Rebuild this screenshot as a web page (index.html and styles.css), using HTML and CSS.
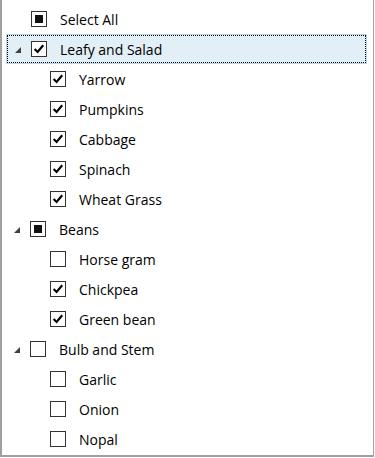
FILE: index.html
```html
<!DOCTYPE html>
<html>
<head>
    <meta charset="UTF-8">
    <title>Tree View</title>
    <link rel="stylesheet" href="styles.css">
</head>
<body>
    <div class="tree">
        <div class="row level0">
            <span class="box mixed"></span>
            <span class="label">Select All</span>
        </div>

        <!-- Leafy and Salad -->
        <div class="row level1 selected">
            <span class="arrow"></span>
            <span class="box checked"><svg viewBox="0 0 16 16"><path d="M3 8 L6.4 11.4 L12.8 3.8"/></svg></span>
            <span class="label">Leafy and Salad</span>
        </div>
        <div class="row level2">
            <span class="box checked"><svg viewBox="0 0 16 16"><path d="M3 8 L6.4 11.4 L12.8 3.8"/></svg></span>
            <span class="label">Yarrow</span>
        </div>
        <div class="row level2">
            <span class="box checked"><svg viewBox="0 0 16 16"><path d="M3 8 L6.4 11.4 L12.8 3.8"/></svg></span>
            <span class="label">Pumpkins</span>
        </div>
        <div class="row level2">
            <span class="box checked"><svg viewBox="0 0 16 16"><path d="M3 8 L6.4 11.4 L12.8 3.8"/></svg></span>
            <span class="label">Cabbage</span>
        </div>
        <div class="row level2">
            <span class="box checked"><svg viewBox="0 0 16 16"><path d="M3 8 L6.4 11.4 L12.8 3.8"/></svg></span>
            <span class="label">Spinach</span>
        </div>
        <div class="row level2">
            <span class="box checked"><svg viewBox="0 0 16 16"><path d="M3 8 L6.4 11.4 L12.8 3.8"/></svg></span>
            <span class="label">Wheat Grass</span>
        </div>

        <!-- Beans -->
        <div class="row level1">
            <span class="arrow"></span>
            <span class="box mixed"></span>
            <span class="label">Beans</span>
        </div>
        <div class="row level2">
            <span class="box"></span>
            <span class="label">Horse gram</span>
        </div>
        <div class="row level2">
            <span class="box checked"><svg viewBox="0 0 16 16"><path d="M3 8 L6.4 11.4 L12.8 3.8"/></svg></span>
            <span class="label">Chickpea</span>
        </div>
        <div class="row level2">
            <span class="box checked"><svg viewBox="0 0 16 16"><path d="M3 8 L6.4 11.4 L12.8 3.8"/></svg></span>
            <span class="label">Green bean</span>
        </div>

        <!-- Bulb and Stem -->
        <div class="row level1">
            <span class="arrow"></span>
            <span class="box"></span>
            <span class="label">Bulb and Stem</span>
        </div>
        <div class="row level2">
            <span class="box"></span>
            <span class="label">Garlic</span>
        </div>
        <div class="row level2">
            <span class="box"></span>
            <span class="label">Onion</span>
        </div>
        <div class="row level2">
            <span class="box"></span>
            <span class="label">Nopal</span>
        </div>
    </div>
</body>
</html>
```
FILE: styles.css
```css
html, body {
    margin: 0;
    padding: 0;
    background-color: #ffffff;
}

body {
    font-family: "Open Sans", "Noto Sans", sans-serif;
    font-size: 14px;
    color: #000000;
}

.tree {
    box-sizing: border-box;
    width: 374px;
    height: 457px;
    padding-top: 4px;
    border-left: 2px solid #a0a0a0;
    border-right: 1px solid #a0a0a0;
    border-bottom: 2px solid #a0a0a0;
    overflow: hidden;
}

.row {
    box-sizing: border-box;
    height: 30px;
    display: flex;
    align-items: center;
}

.level0 {
    padding-left: 29px;
}

.level1 {
    padding-left: 12px;
}

.level2 {
    padding-left: 48px;
}

.selected {
    margin-left: 4px;
    width: 361px;
    padding-left: 8px;
    background-color: #e3eff7;
    border: 1px solid #b4d6e8;
    outline: 1px dotted #000000;
    outline-offset: -2px;
}

.arrow {
    width: 0;
    height: 0;
    border-left: 6px solid transparent;
    border-bottom: 6px solid #404040;
    margin-right: 10px;
    margin-top: 2px;
}

.box {
    box-sizing: border-box;
    width: 16px;
    height: 16px;
    border: 1px solid #333333;
    background-color: #ffffff;
    display: flex;
    align-items: center;
    justify-content: center;
    flex-shrink: 0;
}

.box.mixed::after {
    content: "";
    width: 8px;
    height: 8px;
    background-color: #111111;
}

.box svg {
    width: 16px;
    height: 16px;
}

.box svg path {
    fill: none;
    stroke: #000000;
    stroke-width: 2.5;
}

.label {
    margin-left: 13px;
    white-space: nowrap;
}
```
